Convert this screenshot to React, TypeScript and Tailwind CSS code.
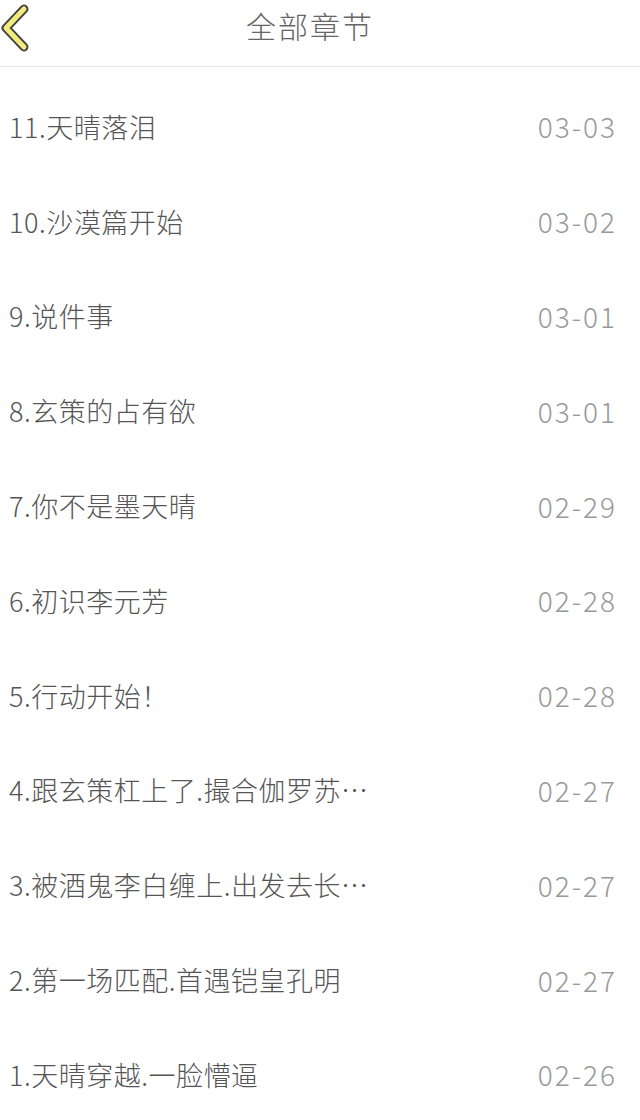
const chapters = [
  { title: "11.天晴落泪", date: "03-03" },
  { title: "10.沙漠篇开始", date: "03-02" },
  { title: "9.说件事", date: "03-01" },
  { title: "8.玄策的占有欲", date: "03-01" },
  { title: "7.你不是墨天晴", date: "02-29" },
  { title: "6.初识李元芳", date: "02-28" },
  { title: "5.行动开始！", date: "02-28" },
  { title: "4.跟玄策杠上了.撮合伽罗苏…", date: "02-27" },
  { title: "3.被酒鬼李白缠上.出发去长…", date: "02-27" },
  { title: "2.第一场匹配.首遇铠皇孔明", date: "02-27" },
  { title: "1.天晴穿越.一脸懵逼", date: "02-26" },
];

export default function App() {
  return (
    <main className="w-[640px] h-[1120px] bg-white overflow-hidden font-['Noto_Sans_CJK_SC',sans-serif]">
      <header className="relative h-[67px] flex items-center justify-center border-b border-[#e6e6e6]">
        <button className="absolute left-0 top-[2px] w-[32px] h-[50px]">
          <svg width="32" height="50" viewBox="0 0 32 50">
            <path d="M24 7 L6 26 L24 45" fill="none" stroke="#444" strokeWidth="9" strokeLinecap="round" strokeLinejoin="round" />
            <path d="M24 7 L6 26 L24 45" fill="none" stroke="#f3eb7a" strokeWidth="5" strokeLinecap="round" strokeLinejoin="round" />
          </svg>
        </button>
        <h1 className="text-[30px] font-light text-[#666] tracking-[2px] leading-none -mt-[16px] pr-[20px]">全部章节</h1>
      </header>
      <ul className="pt-[12px]">
        {chapters.map((c, i) => (
          <li key={i} className="h-[94.8px] flex items-center justify-between pl-[9px] pr-[23px]">
            <span className="text-[27px] font-light text-[#555] tracking-[0.5px] leading-none whitespace-nowrap">{c.title}</span>
            <span className="text-[28px] font-light text-[#999] tracking-[2px] leading-none">{c.date}</span>
          </li>
        ))}
      </ul>
    </main>
  );
}
